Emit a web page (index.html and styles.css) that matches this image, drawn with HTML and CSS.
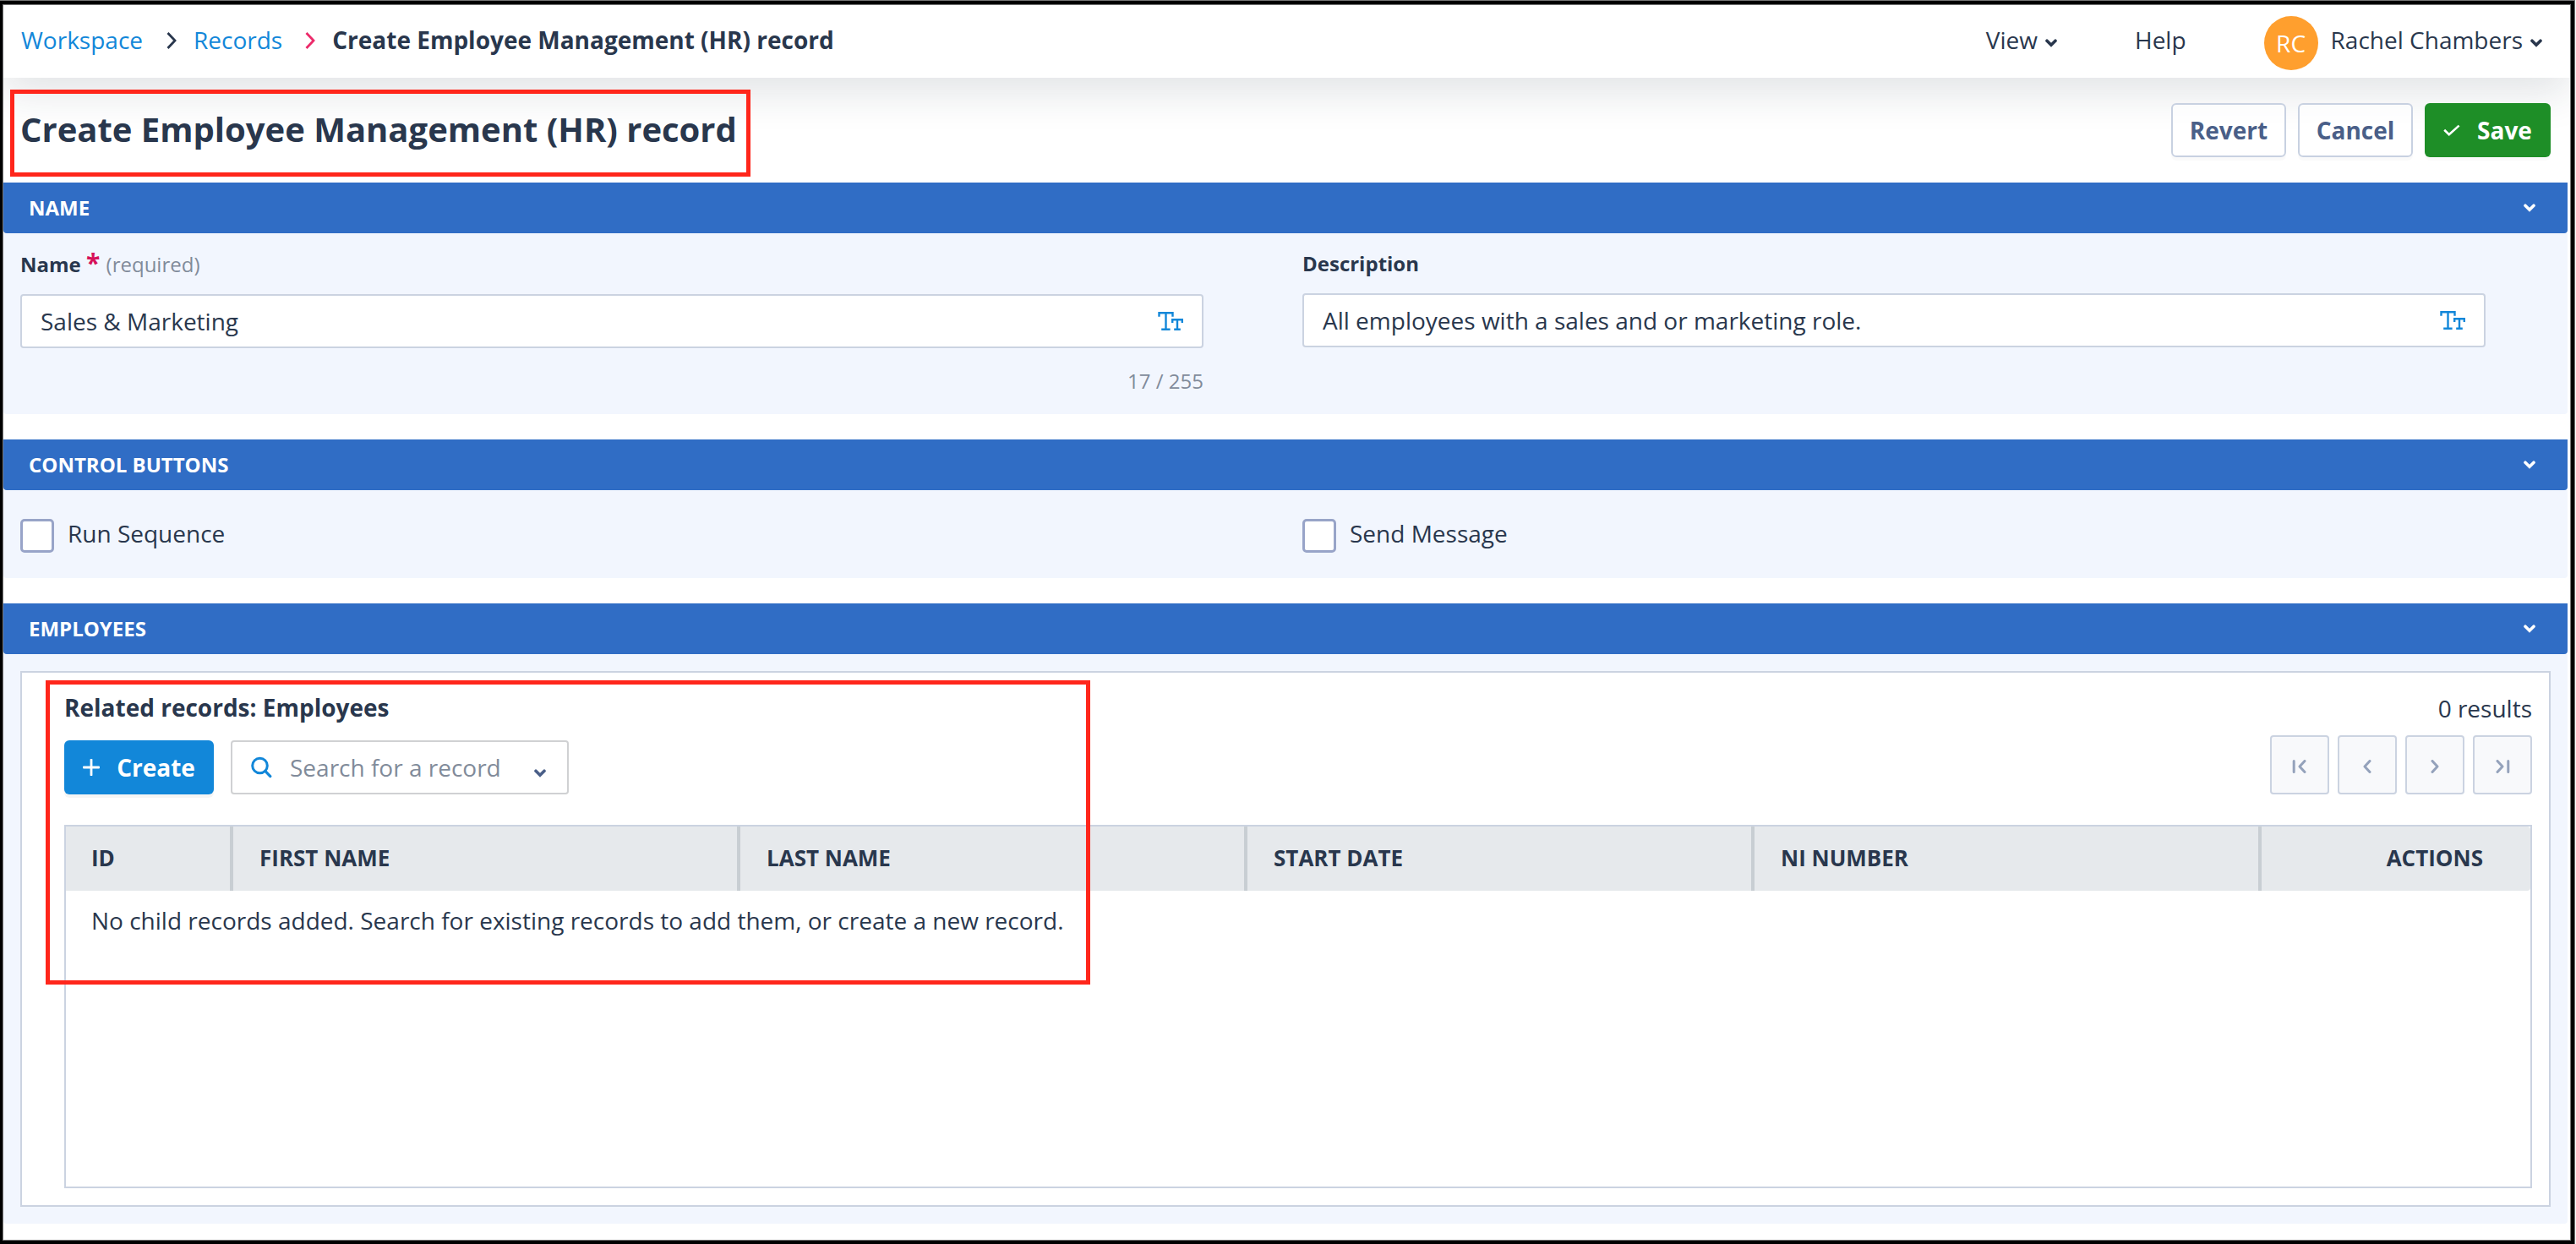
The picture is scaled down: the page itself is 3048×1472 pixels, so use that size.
FILE: index.html
```html
<!DOCTYPE html>
<html lang="en">
<head>
    <meta charset="UTF-8">
    <meta name="viewport" content="width=device-width, initial-scale=1.0">
    <title>Create Employee Management (HR) record</title>
    <link rel="stylesheet" href="styles.css">
</head>
<body>
    <svg class="sprite">
        <symbol id="chevron-down" viewBox="0 0 14 10">
            <path d="M2 2.2l5 5 5-5" fill="none" stroke="currentColor" stroke-width="3.6" stroke-linecap="round"/>
        </symbol>
        <symbol id="crumb" viewBox="0 0 12 22">
            <path d="M1.5 2L10 11 1.5 20" fill="none" stroke="currentColor" stroke-width="2.8"/>
        </symbol>
        <symbol id="text-type" viewBox="0 0 30 22">
            <path d="M1.5 5.8V1.2h16v4.6M9.5 1.2v19.6M4.2 20.8h10.4M17.2 13V9.2h11.6V13M23 9.2v11.6M19.2 20.8h7.6" fill="none" stroke="currentColor" stroke-width="2.4"/>
        </symbol>
    </svg>

    <div class="window">
        <header class="topbar">
            <nav class="breadcrumb">
                <a href="#">Workspace</a>
                <svg class="crumb"><use href="#crumb"/></svg>
                <a href="#">Records</a>
                <svg class="crumb crumb-pink"><use href="#crumb"/></svg>
                <strong>Create Employee Management (HR) record</strong>
            </nav>
            <nav class="menu">
                <span class="menu-item">View <svg class="chevron"><use href="#chevron-down"/></svg></span>
                <span class="menu-item">Help</span>
                <span class="menu-item">
                    <span class="avatar">RC</span>
                    Rachel Chambers
                    <svg class="chevron"><use href="#chevron-down"/></svg>
                </span>
            </nav>
        </header>

        <div class="page-head">
            <h1>Create Employee Management (HR) record</h1>
            <div class="actions">
                <button class="btn">Revert</button>
                <button class="btn">Cancel</button>
                <button class="btn btn-save">
                    <svg width="20" height="14" viewBox="0 0 20 14"><path d="M1.2 6.8l5.6 5.4L18.6 1.6" fill="none" stroke="currentColor" stroke-width="2.6"/></svg>
                    Save
                </button>
            </div>
            <div class="highlight highlight-title"></div>
        </div>

        <section class="section">
            <h2 class="section-head">Name <svg class="chevron"><use href="#chevron-down"/></svg></h2>
            <div class="section-body fields">
                <div class="field">
                    <label class="label label-required" for="name">Name <span class="star">*</span> <span class="required">(required)</span></label>
                    <div class="input">
                        <input type="text" id="name" value="Sales &amp; Marketing">
                        <svg class="type-icon"><use href="#text-type"/></svg>
                    </div>
                    <div class="counter">17 / 255</div>
                </div>
                <div class="field">
                    <label class="label" for="description">Description</label>
                    <div class="input">
                        <input type="text" id="description" value="All employees with a sales and or marketing role.">
                        <svg class="type-icon"><use href="#text-type"/></svg>
                    </div>
                </div>
            </div>
        </section>

        <section class="section">
            <h2 class="section-head">Control buttons <svg class="chevron"><use href="#chevron-down"/></svg></h2>
            <div class="section-body fields checks">
                <label class="check"><input type="checkbox"><span>Run Sequence</span></label>
                <label class="check"><input type="checkbox"><span>Send Message</span></label>
            </div>
        </section>

        <section class="section">
            <h2 class="section-head">Employees <svg class="chevron"><use href="#chevron-down"/></svg></h2>
            <div class="section-body employees">
                <div class="panel">
                    <div class="panel-top">
                        <div>
                            <h3>Related records: Employees</h3>
                            <div class="tools">
                                <button class="btn btn-create">
                                    <svg width="20" height="20" viewBox="0 0 20 20"><path d="M10 1v18M1 10h18" fill="none" stroke="currentColor" stroke-width="2.8" stroke-linecap="round"/></svg>
                                    Create
                                </button>
                                <div class="search">
                                    <svg width="25" height="26" viewBox="0 0 25 26"><circle cx="10.5" cy="11" r="8.8" fill="none" stroke="currentColor" stroke-width="3"/><path d="M16.8 17.4l6 6.2" fill="none" stroke="currentColor" stroke-width="3.2" stroke-linecap="round"/></svg>
                                    <span>Search for a record</span>
                                    <svg class="chevron"><use href="#chevron-down"/></svg>
                                </div>
                            </div>
                        </div>
                        <div>
                            <div class="results">0 results</div>
                            <div class="pager">
                                <button><svg width="18" height="16" viewBox="0 0 18 16"><path d="M2.2 1.5v13M15 1.5L9 8l6 6.5"/></svg></button>
                                <button><svg width="18" height="16" viewBox="0 0 18 16"><path d="M12 1.5L6 8l6 6.5"/></svg></button>
                                <button><svg width="18" height="16" viewBox="0 0 18 16"><path d="M6 1.5L12 8l-6 6.5"/></svg></button>
                                <button><svg width="18" height="16" viewBox="0 0 18 16"><path d="M3 1.5L9 8l-6 6.5M15.8 1.5v13"/></svg></button>
                            </div>
                        </div>
                    </div>
                    <div class="table">
                        <div class="table-head">
                            <div>ID</div>
                            <div>First name</div>
                            <div>Last name</div>
                            <div>Start date</div>
                            <div>NI number</div>
                            <div>Actions</div>
                        </div>
                        <p>No child records added. Search for existing records to add them, or create a new record.</p>
                    </div>
                    <div class="highlight highlight-records"></div>
                </div>
            </div>
        </section>
    </div>
</body>
</html>
```
FILE: styles.css
```css
* {
    box-sizing: border-box;
}
body {
    width: 3047px;
    margin: 0;
    border: solid #777;
    border-width: 1px 1px 0 0;
    background-color: #fff;
    color: #29374d;
    font-family: "Open Sans", sans-serif;
    font-size: 28px;
}
h1, h2, h3, p {
    margin: 0;
}
button, input {
    font: inherit;
    color: inherit;
}
svg {
    display: block;
    flex: none;
}
.sprite {
    display: none;
}
.chevron {
    width: 14px;
    height: 10px;
}

/* outer frame */
.window {
    height: 1471px;
    border: 4px solid #000;
    border-left-width: 3px;
    background-color: #fff;
    box-shadow: inset 0 0 0 1px #777;
    padding: 1px;
    overflow: hidden;
}

/* top bar */
.topbar {
    position: relative;
    z-index: 1;
    display: flex;
    justify-content: space-between;
    height: 86px;
    padding: 0 33px 0 21px;
    background-color: #fff;
    box-shadow: 0 18px 48px rgba(30, 45, 60, 0.13);
}
.breadcrumb, .menu {
    display: flex;
    align-items: center;
    height: 82px;
}
.breadcrumb a {
    color: #1287d9;
    text-decoration: none;
}
.crumb {
    width: 12px;
    height: 22px;
    margin: 1px 20px 0 28px;
}
.crumb-pink {
    margin-left: 27px;
    color: #ec2a6a;
}
.menu {
    gap: 91px;
}
.menu-item {
    display: flex;
    align-items: center;
}
.menu .chevron {
    margin: 7px 0 0 9px;
}
.avatar {
    width: 64px;
    height: 64px;
    margin: 8px 15px 0 0;
    border-radius: 50%;
    background-color: #ff9f2e;
    color: #fff;
    line-height: 64px;
    text-align: center;
}
.menu-item:nth-child(-n+2) {
    margin-right: 1px;
}

/* page title and buttons */
.page-head {
    position: relative;
    z-index: 2;
    display: flex;
    align-items: center;
    justify-content: space-between;
    height: 124px;
    padding: 0 23px 0 20px;
}
h1 {
    padding-bottom: 3px;
    font-size: 40px;
    line-height: 54px;
}
.actions {
    display: flex;
    gap: 14px;
}
.btn {
    display: flex;
    align-items: center;
    justify-content: center;
    width: 136px;
    height: 64px;
    padding: 0;
    border: 2px solid #c8d1e1;
    border-radius: 6px;
    background-color: rgba(255, 255, 255, 0.6);
    box-shadow: 0 4px 0 rgba(0, 0, 0, 0.02);
    color: #4a5f88;
    font-weight: bold;
}
.btn-save {
    gap: 20px;
    width: 149px;
    border: none;
    background-color: #1e8e27;
    color: #fff;
}
.btn-create {
    gap: 20px;
    width: 177px;
    border: none;
    background-color: #1287d9;
    box-shadow: 0 4px 0 rgba(0, 0, 0, 0.04);
    color: #fff;
}

/* sections */
.section {
    width: 3034px;
    margin-bottom: 30px;
}
.section-head {
    display: flex;
    align-items: center;
    justify-content: space-between;
    height: 60px;
    padding: 0 38px 1px 30px;
    border-radius: 0 0 4px 4px;
    background-color: #306dc5;
    color: #fff;
    font-size: 24px;
    text-transform: uppercase;
}
.section-head .chevron {
    margin-top: 1px;
}
.section-body {
    border-radius: 0 0 4px 4px;
    background-color: #f2f6fe;
}
.fields {
    display: grid;
    grid-template-columns: 1400px 1400px;
    column-gap: 117px;
    height: 214px;
    padding: 20px 20px 0;
}
.label {
    display: block;
    height: 33px;
    margin-bottom: 18px;
    font-size: 24px;
    font-weight: bold;
    line-height: 31px;
}
.label-required {
    height: 34px;
    line-height: 33px;
}
.star {
    color: #d6115a;
    font-size: 30px;
    line-height: 1;
}
.required {
    margin-left: 1px;
    color: #818b9a;
    font-weight: normal;
}
.input {
    display: flex;
    align-items: center;
    height: 64px;
    padding: 0 22px;
    border: 2px solid #cbd3e1;
    border-radius: 4px;
    background-color: #fff;
}
.input input {
    flex: 1;
    padding: 0;
    border: none;
    background: none;
}
.type-icon {
    width: 30px;
    height: 22px;
    color: #1287d9;
}
.counter {
    margin-top: 22px;
    color: #818b9a;
    font-size: 24px;
    line-height: 33px;
    text-align: right;
}
.checks {
    height: 104px;
    padding-top: 34px;
}
.check {
    display: flex;
    gap: 16px;
    line-height: 34px;
}
.check input {
    appearance: none;
    width: 40px;
    height: 40px;
    margin: 0;
    border: 3px solid #98a4c8;
    border-radius: 5px;
    background-color: #fff;
}

/* related records */
.employees {
    padding: 20px;
}
.panel {
    position: relative;
    height: 634px;
    padding: 22px 20px 20px 50px;
    border: 2px solid #cbd3e1;
    background-color: #fff;
}
.panel-top {
    display: flex;
    justify-content: space-between;
    margin-bottom: 36px;
}
h3 {
    margin-bottom: 20px;
    font-size: 28px;
    line-height: 38px;
}
.tools {
    display: flex;
    gap: 20px;
}
.search {
    display: flex;
    align-items: center;
    width: 400px;
    height: 64px;
    padding: 0 25px 0 22px;
    border: 2px solid #d0d1d3;
    border-radius: 4px;
    color: #1287d9;
}
.search span {
    flex: 1;
    margin-left: 21px;
    color: #818b9a;
}
.search .chevron {
    margin-top: 13px;
    color: #4a5f88;
}
.results {
    margin-bottom: 12px;
    line-height: 40px;
    text-align: right;
}
.pager {
    display: flex;
    gap: 10px;
}
.pager button {
    display: flex;
    align-items: center;
    justify-content: center;
    width: 70px;
    height: 70px;
    padding: 4px 0 0;
    border: 2px solid #cbd3e1;
    border-radius: 4px;
    background-color: #f8f9fb;
}
.pager path {
    fill: none;
    stroke: #94a2bb;
    stroke-width: 3;
    stroke-linecap: round;
    stroke-linejoin: round;
}
.table {
    height: 430px;
    border: 2px solid #cbd3e1;
}
.table-head {
    display: grid;
    grid-template-columns: 198px repeat(4, 600px) 1fr;
    height: 76px;
    border-radius: 0 4px 4px 0;
    background-color: #e6e9ec;
    font-size: 26px;
    font-weight: bold;
    line-height: 74px;
    text-transform: uppercase;
}
.table-head div {
    padding-left: 31px;
    border-right: 4px solid #c8ced3;
}
.table-head div:first-child {
    padding-left: 30px;
}
.table-head div:last-child {
    padding-right: 56px;
    border-right: none;
    text-align: right;
}
.table p {
    padding: 16px 30px;
    line-height: 38px;
}

/* red marker boxes drawn over the page */
.highlight {
    position: absolute;
    border: 5px solid #ff261b;
}
.highlight-title {
    top: 14px;
    left: 8px;
    width: 876px;
    height: 103px;
}
.highlight-records {
    top: 9px;
    left: 28px;
    width: 1236px;
    height: 360px;
}
```
